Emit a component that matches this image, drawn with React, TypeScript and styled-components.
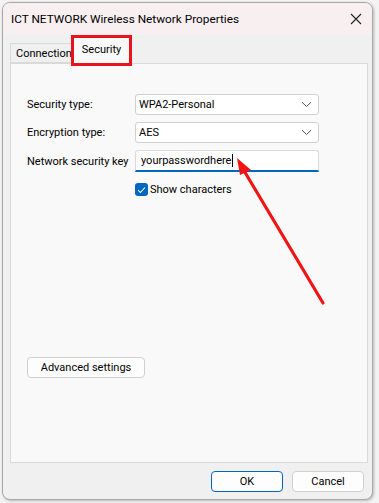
import React from "react";
import styled, { createGlobalStyle } from "styled-components";

const FONT = `"Segoe UI", Roboto, "Noto Sans", sans-serif`;
const FS = "11px";

const Global = createGlobalStyle`
  html, body { margin: 0; padding: 0; background: #f3f3f3; }
  body { font-family: ${FONT}; font-size: ${FS}; color: #000; }
  * { box-sizing: border-box; }
`;

const Page = styled.div`
  width: 379px;
  height: 503px;
  padding: 2px 6px 3px 2px;
  position: relative;
`;

const Window = styled.div`
  width: 371px;
  height: 498px;
  border: 1px solid #a8a8a8;
  border-radius: 8px;
  overflow: hidden;
  background: #f0f0f0;
  display: flex;
  flex-direction: column;
  box-shadow: 1px 1px 3px rgba(0,0,0,0.25);
`;

const TitleBar = styled.div`
  height: 31px;
  flex: none;
  background: #f8eff0;
  display: flex;
  align-items: center;
  justify-content: space-between;
  padding: 0 6px 0 8px;
  font-size: 11.8px;
`;

const CloseBtn = styled.div`
  width: 20px;
  height: 20px;
  display: flex;
  align-items: center;
  justify-content: center;
`;

const Body = styled.div`
  flex: 1;
  display: flex;
  flex-direction: column;
  padding: 2px 4px 0 7px;
`;

const TabRow = styled.div`
  display: flex;
  align-items: flex-end;
  height: 27px;
  position: relative;
  z-index: 1;
`;

const Tab = styled.div<{ $active?: boolean }>`
  height: ${p => (p.$active ? 27 : 20)}px;
  padding: 0 ${p => (p.$active ? "9px" : "0 0 5px")};
  margin-bottom: ${p => (p.$active ? -1 : 0)}px;
  background: ${p => (p.$active ? "#f9f9f9" : "#f0f0f0")};
  border: 1px solid #d9d9d9;
  border-bottom: ${p => (p.$active ? "none" : "1px solid #d9d9d9")};
  border-right: ${p => (p.$active ? "1px solid #d9d9d9" : "none")};
  display: flex;
  align-items: ${p => (p.$active ? "flex-start" : "center")};
  padding-top: ${p => (p.$active ? 5 : 1)}px;
  font-size: ${FS};
  position: relative;
`;

const Highlight = styled.div`
  position: absolute;
  left: -2px;
  top: -3px;
  right: -2px;
  bottom: -2px;
  border: 3px solid #e8141c;
  pointer-events: none;
`;

const Panel = styled.div`
  width: 358px;
  height: 400px;
  background: #f9f9f9;
  border: 1px solid #d9d9d9;
  display: flex;
  flex-direction: column;
  padding: 30px 0 0 16px;
`;

const FormGrid = styled.div`
  display: grid;
  grid-template-columns: 108px 184px;
  row-gap: 7px;
  align-items: center;
`;

const Label = styled.div`
  font-size: ${FS};
  line-height: 15px;
  white-space: nowrap;
`;

const Select = styled.div`
  height: 21px;
  border: 1px solid #d0d0d0;
  border-radius: 3px;
  background: #fff;
  display: flex;
  align-items: center;
  justify-content: space-between;
  padding: 0 6px 0 3px;
  font-size: ${FS};
`;

const TextInput = styled.div`
  height: 22px;
  border: 1px solid #d9d9d9;
  border-bottom: 2px solid #0067c0;
  border-radius: 3px 3px 0 0;
  background: #fff;
  display: flex;
  align-items: center;
  padding: 0 5px;
  font-size: ${FS};
`;

const Caret = styled.span`
  display: inline-block;
  width: 1px;
  height: 13px;
  background: #000;
  margin-left: 1px;
`;

const CheckRow = styled.div`
  grid-column: 2;
  display: flex;
  align-items: center;
  gap: 2px;
  height: 13px;
  margin-top: 4px;
`;

const CheckBox = styled.div`
  width: 13px;
  height: 13px;
  border-radius: 3px;
  background: #0067c0;
  display: flex;
  align-items: center;
  justify-content: center;
`;

const Spacer = styled.div`
  height: 161px;
  flex: none;
`;

const Button = styled.div<{ $primary?: boolean; $w?: number }>`
  width: ${p => p.$w ?? 72}px;
  height: 21px;
  border: 1px solid ${p => (p.$primary ? "#0067c0" : "#d0d0d0")};
  border-radius: 4px;
  background: #fdfdfd;
  display: flex;
  align-items: center;
  justify-content: center;
  font-size: ${FS};
`;

const Footer = styled.div`
  display: flex;
  justify-content: flex-end;
  gap: 9px;
  padding: 8px 4px 0 0;
`;

const ArrowSvg = styled.svg`
  position: absolute;
  left: 0;
  top: 0;
  pointer-events: none;
`;

const Chevron = () => (
  <svg width="11" height="7" viewBox="0 0 11 7">
    <path d="M1 1.2 L5.5 5.5 L10 1.2" fill="none" stroke="#555" strokeWidth="1" />
  </svg>
);

export default function App() {
  return (
    <>
      <Global />
      <Page>
        <Window>
          <TitleBar>
            <span>ICT NETWORK Wireless Network Properties</span>
            <CloseBtn>
              <svg width="12" height="12" viewBox="0 0 12 12">
                <path d="M1 1 L11 11 M11 1 L1 11" stroke="#222" strokeWidth="1.1" />
              </svg>
            </CloseBtn>
          </TitleBar>
          <Body>
            <TabRow>
              <Tab>Connection</Tab>
              <Tab $active>
                Security
                <Highlight />
              </Tab>
            </TabRow>
            <Panel>
              <FormGrid>
                <Label>Security type:</Label>
                <Select>
                  <span>WPA2-Personal</span>
                  <Chevron />
                </Select>
                <Label>Encryption type:</Label>
                <Select>
                  <span>AES</span>
                  <Chevron />
                </Select>
                <Label>Network security key</Label>
                <TextInput>
                  <span>yourpasswordhere</span>
                  <Caret />
                </TextInput>
                <CheckRow>
                  <CheckBox>
                    <svg width="9" height="8" viewBox="0 0 9 8">
                      <path d="M1 4.2 L3.4 6.5 L8 1.5" fill="none" stroke="#fff" strokeWidth="1.1" />
                    </svg>
                  </CheckBox>
                  <Label>Show characters</Label>
                </CheckRow>
              </FormGrid>
              <Spacer />
              <Button $w={118}>Advanced settings</Button>
            </Panel>
            <Footer>
              <Button $primary>OK</Button>
              <Button>Cancel</Button>
            </Footer>
          </Body>
        </Window>
        <ArrowSvg width="379" height="503" viewBox="0 0 379 503">
          <line x1="323" y1="303" x2="243" y2="169" stroke="#f01414" strokeWidth="3.2" strokeLinecap="round" />
          <polygon points="237,158 251,170 240,175" fill="#f01414" />
        </ArrowSvg>
      </Page>
    </>
  );
}
